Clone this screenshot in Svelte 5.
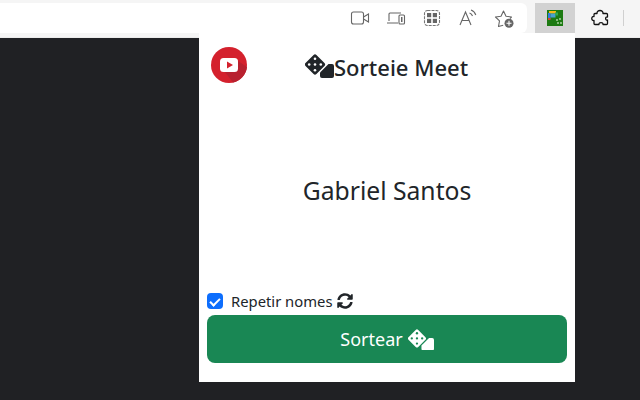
<script>
  let repeat = $state(true);
</script>

{#snippet dice(fg, pip, cls)}
  <svg class={cls} viewBox="0 0 29 24" aria-hidden="true">
    <path d="M23.500 10H27a2 2 0 0 1 2 2v10a2 2 0 0 1-2 2H17a2 2 0 0 1-2-2v-3.500z" fill={fg} />
    <rect x="2.300" y="2.800" width="15.400" height="15.400" rx="2" fill={fg} transform="rotate(45 10 10.500)" />
    <g fill={pip}>
      <circle cx="10" cy="4.700" r="1.300" />
      <circle cx="4.200" cy="10.500" r="1.300" />
      <circle cx="10" cy="10.500" r="1.300" />
      <circle cx="15.800" cy="10.500" r="1.300" />
      <circle cx="10" cy="16.300" r="1.300" />
    </g>
  </svg>
{/snippet}

<div class="browser">
  <header class="toolbar">
    <div class="address">
      <svg class="tool" viewBox="0 0 20 20" fill="none" stroke="#666" stroke-width="1.100"><rect x="1.500" y="4" width="12" height="12" rx="2" /><path d="M13.500 9l5-3v8l-5-3" /></svg>
      <svg class="tool" viewBox="0 0 20 20" fill="none" stroke="#666" stroke-width="1.100"><path d="M3 13V6a1 1 0 0 1 1-1h11M1 15h11" /><rect x="13" y="7" width="5.500" height="9" rx="1" /><rect x="15" y="9" width="1.500" height="5" fill="#666" stroke="none" /></svg>
      <svg class="tool" viewBox="0 0 20 20" fill="none" stroke="#777" stroke-width="1.100"><rect x="2.500" y="2.500" width="15" height="15" rx="3" stroke-dasharray="3 1" /><g fill="#666" stroke="none"><rect x="5" y="5" width="4.200" height="4.200" /><rect x="10.800" y="5" width="4.200" height="4.200" /><rect x="5" y="10.800" width="4.200" height="4.200" /><rect x="10.800" y="10.800" width="4.200" height="4.200" /></g></svg>
      <svg class="tool" viewBox="0 0 20 20" fill="none" stroke="#666" stroke-width="1.100"><path d="M2 17L7.500 4l5.500 13M4 12.500h7" /><path d="M11.500 5c1.500.5 2.500 1.500 3 3M13 2c2.500.8 4 2.500 4.800 5" /></svg>
      <svg class="tool" viewBox="0 0 20 20" fill="none" stroke="#666" stroke-width="1.100"><path d="M9.200 17.200l-4.700 1.300 1-5.700L1.500 9l5.500-.8L9.500 3l2.500 5.200 5.500.8-1.500 1.500" stroke-linejoin="round" /><circle cx="15" cy="15.300" r="4.500" fill="#666" stroke="none" /><path d="M15 12.800v5M12.500 15.300h5" stroke="#fff" /></svg>
    </div>
    <div class="ext active">
      <svg viewBox="0 0 16 16" width="16" height="16">
        <rect width="16" height="16" fill="#1c7a12" />
        <rect x="2" y="1" width="7" height="2.500" fill="#f5b915" />
        <rect x="1" y="3" width="2.500" height="6" fill="#3478e0" />
        <rect x="3.500" y="3.500" width="5" height="4" fill="#4a9fd0" />
        <rect x="8" y="2.500" width="3" height="3" fill="#33a852" />
        <rect x="1" y="8" width="2.500" height="2" fill="#d9402f" />
        <g fill="#a8d0a0"><circle cx="10" cy="10" r="1" /><circle cx="13" cy="9" r="1" /><circle cx="11" cy="13" r="1" /><circle cx="14" cy="13" r="1" /></g>
      </svg>
    </div>
    <div class="ext">
      <svg viewBox="0 0 20 20" width="20" height="20" fill="none" stroke="#111" stroke-width="1.300" stroke-linejoin="round"><path d="M7 5.500C6.500 1.500 13.500 1.500 13 5.500h3.500q1 0 1 1V9C15 8.500 15 12.500 17.500 12v3.500q0 1-1 1H13c.5-2.500-4.500-2.500-4 0H5q-1 0-1-1v-3C1 13 1 8 4 8.500v-2q0-1 1-1z" /></svg>
    </div>
    <span class="sep"></span>
  </header>

  <main class="popup">
    <div class="head">
      <span class="yt">
        <svg viewBox="0 0 36 36" width="36" height="36">
          <circle cx="18" cy="18" r="18" fill="#d4212d" />
          <path d="M14 25l13-11 9 6a18 18 0 0 1-14 15.500z" fill="#b8212f" />
          <rect x="9" y="11" width="18" height="14" rx="3.500" fill="#fff" />
          <path d="M16 14.500l6 3.500-6 3.500z" fill="#d4212d" />
        </svg>
      </span>
      <h1>{@render dice("#212529", "#fff", "title-dice")}Sorteie Meet</h1>
    </div>
    <p class="name">Gabriel Santos</p>
    <label class="check">
      <input type="checkbox" bind:checked={repeat} />
      <span>Repetir nomes</span>
      <svg viewBox="0 0 512 512" width="16" height="16"><path fill="#212529" d="M370.700 133.300C339.500 104 298.900 88 255.800 88c-77.500.1-144.300 53.200-162.800 126.900-1.300 5.400-6.100 9.100-11.600 9.100H24.100c-7.500 0-13.200-6.800-11.800-14.200C33.900 94.900 134.800 8 256 8c66.400 0 126.800 26.100 171.300 68.700L463 41c15.100-15.100 41-4.400 41 17v134c0 13.300-10.700 24-24 24H346c-21.400 0-32.100-25.900-17-41zM32 296h134c21.400 0 32.100 25.900 17 41l-41.700 41.700c31.200 29.300 71.800 45.300 114.900 45.300 77.400-.1 144.300-53.100 162.800-126.900 1.300-5.400 6.100-9.100 11.600-9.100h57.300c7.500 0 13.200 6.800 11.800 14.200C478.100 417.100 377.200 504 256 504c-66.400 0-126.800-26.100-171.300-68.700L49 471c-15.100 15.100-41 4.400-41-17V320c0-13.300 10.700-24 24-24z" /></svg>
    </label>
    <button class="draw">Sortear {@render dice("#fff", "#198754", "btn-dice")}</button>
  </main>
</div>

<style>
  :global(body) {
    margin: 0;
    background: #202124;
  }
  .browser {
    position: relative;
    width: 640px;
    height: 400px;
    overflow: hidden;
    font-family: "Noto Sans", "Open Sans", sans-serif;
    color: #212529;
  }
  .toolbar {
    display: flex;
    align-items: flex-start;
    height: 38px;
    box-sizing: border-box;
    padding-top: 3px;
    background: #f5f5f5;
    border-bottom: 1px solid #ececec;
  }
  .address {
    display: flex;
    justify-content: flex-end;
    align-items: center;
    gap: 16px;
    width: 527px;
    height: 30px;
    box-sizing: border-box;
    padding-right: 13px;
    background: #fff;
    border-radius: 0 6px 6px 0;
  }
  .tool {
    width: 20px;
    height: 20px;
  }
  .ext {
    display: flex;
    align-items: center;
    justify-content: center;
    width: 40px;
    height: 30px;
  }
  .ext.active {
    margin-left: 8px;
    background: #d2d2d2;
  }
  .ext:not(.active) {
    margin-left: 5px;
  }
  .sep {
    width: 1px;
    height: 16px;
    margin: 7px 0 0 3px;
    background: #d0d0d0;
  }
  .popup {
    position: absolute;
    left: 199px;
    top: 33px;
    width: 376px;
    height: 349px;
    box-sizing: border-box;
    padding: 14px 8px 19px;
    display: flex;
    flex-direction: column;
    background: #fff;
  }
  .head {
    display: flex;
    align-items: flex-start;
    height: 36px;
    padding-left: 4px;
  }
  .yt {
    display: block;
    height: 36px;
  }
  h1 {
    display: flex;
    align-items: center;
    margin: 4px 0 0 58px;
    font-size: 22px;
    line-height: 32px;
    font-weight: 500;
    white-space: nowrap;
  }
  .title-dice {
    width: 29px;
    height: 24px;
    margin-top: -2px;
  }
  .name {
    margin: 90px 0 0;
    text-align: center;
    font-size: 24.7px;
    line-height: 36px;
  }
  .check {
    display: flex;
    align-items: center;
    gap: 8px;
    margin-top: auto;
    height: 24px;
    margin-bottom: 2px;
    font-size: 14.8px;
  }
  .check svg {
    margin-left: -3px;
  }
  .check input {
    appearance: none;
    position: relative;
    width: 16px;
    height: 16px;
    margin: 0;
    border-radius: 4px;
    background: #0d6efd;
  }
  .check input::after {
    content: "";
    position: absolute;
    left: 5px;
    top: 2.500px;
    width: 4px;
    height: 8px;
    border: solid #fff;
    border-width: 0 2px 2px 0;
    transform: rotate(45deg);
  }
  .draw {
    display: flex;
    align-items: center;
    justify-content: center;
    gap: 5px;
    width: 360px;
    height: 48px;
    border: 0;
    border-radius: 8px;
    background: #198754;
    color: #fff;
    font: inherit;
    font-size: 18px;
  }
  .btn-dice {
    width: 26px;
    height: 21.500px;
    margin-top: 1px;
  }
</style>
